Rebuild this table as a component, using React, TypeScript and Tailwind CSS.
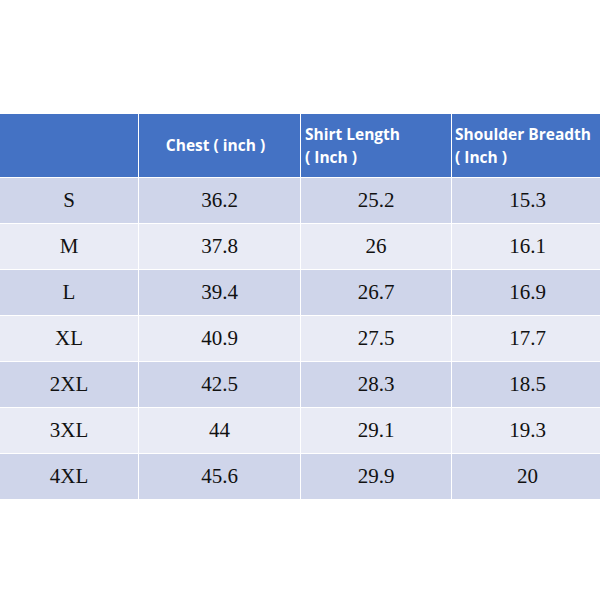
const rows = [
  ["S", "36.2", "25.2", "15.3"],
  ["M", "37.8", "26", "16.1"],
  ["L", "39.4", "26.7", "16.9"],
  ["XL", "40.9", "27.5", "17.7"],
  ["2XL", "42.5", "28.3", "18.5"],
  ["3XL", "44", "29.1", "19.3"],
  ["4XL", "45.6", "29.9", "20"],
];

const cols = "grid grid-cols-[138px_161px_150px_151px] gap-x-[1px]";

export default function App() {
  return (
    <div className="w-[600px] h-[600px] bg-white pt-[114px]">
      <div className="bg-white flex flex-col gap-y-[1px]">
        <div
          className={`${cols} h-[63px] text-white font-bold text-[15.5px] leading-[23px]`}
          style={{ fontFamily: "'Open Sans', 'Noto Sans', sans-serif" }}
        >
          <div className="bg-[#4472c4]" />
          <div className="bg-[#4472c4] flex items-center justify-center pr-[8px]">
            Chest ( inch )
          </div>
          <div className="bg-[#4472c4] flex flex-col justify-center pl-[4px]">
            <span>Shirt Length</span>
            <span>( Inch )</span>
          </div>
          <div className="bg-[#4472c4] flex flex-col justify-center pl-[3px] whitespace-nowrap">
            <span>Shoulder Breadth</span>
            <span>( Inch )</span>
          </div>
        </div>
        {rows.map((r, i) => (
          <div
            key={r[0]}
            className={`${cols} h-[45px] text-[21px] text-[#111]`}
            style={{ fontFamily: "'Liberation Serif', 'Times New Roman', serif" }}
          >
            {r.map((c, j) => (
              <div
                key={j}
                className={`flex items-center justify-center ${
                  i % 2 === 0 ? "bg-[#cfd5ea]" : "bg-[#e9ebf5]"
                }`}
              >
                {c}
              </div>
            ))}
          </div>
        ))}
      </div>
    </div>
  );
}
